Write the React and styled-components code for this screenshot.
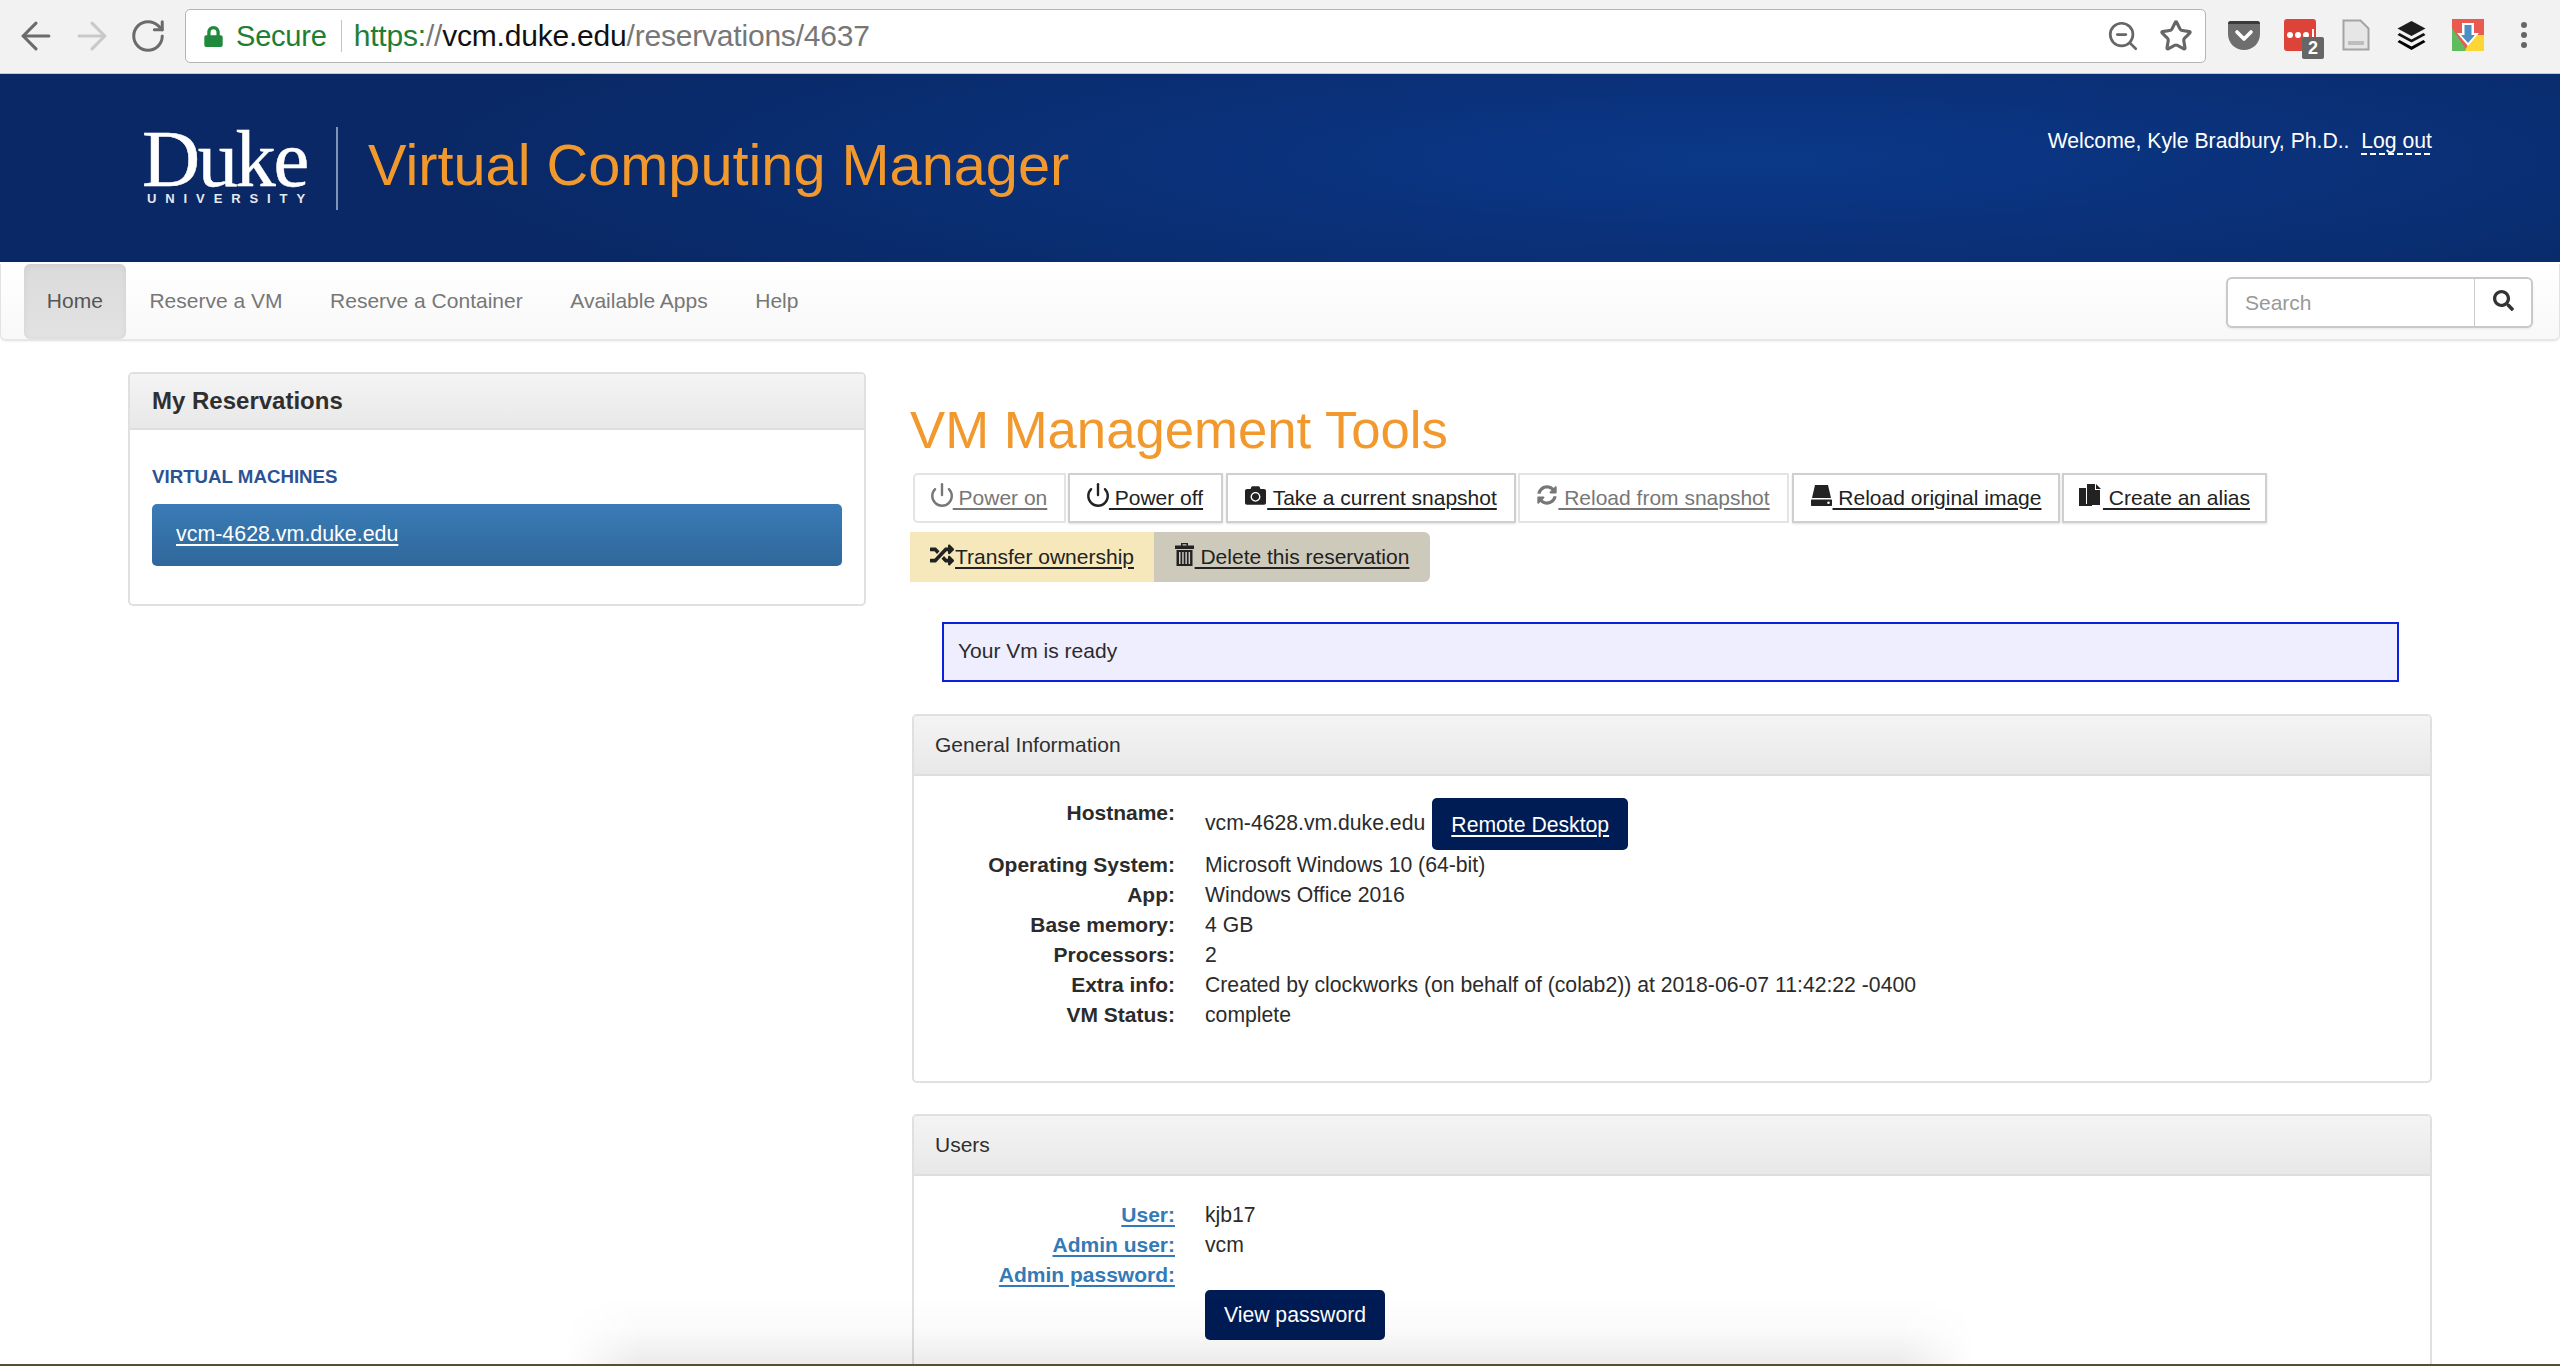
import React from "react";
import styled, { createGlobalStyle } from "styled-components";
import { ArrowLeft, ArrowRight, RotateCw, ZoomOut, Star, Power } from "lucide-react";
import { FaCamera, FaSyncAlt, FaRandom, FaSearch, FaLock } from "react-icons/fa";

const Global = createGlobalStyle`
  html, body { margin: 0; padding: 0; height: 100%; overflow: hidden; background: #fff; }
  body { font-family: "Liberation Sans", Arial, sans-serif; font-size: 21px; color: #2b2b2b; }
  * { box-sizing: border-box; }
`;

const Page = styled.div`
  position: relative;
  width: 2560px;
  height: 1366px;
  overflow: hidden;
  display: flex;
  flex-direction: column;
  background: #fff;
`;

/* browser chrome */
const Chrome = styled.div`
  flex: none;
  height: 74px;
  background: #f2f2f2;
  border-bottom: 1px solid #c8c8c8;
  display: flex;
  align-items: center;
  padding: 0 0 1px 14px;
`;
const NavIcons = styled.div`
  display: flex;
  align-items: center;
  gap: 12px;
  width: 171px;
  flex: none;
`;
const NavIcon = styled.span`
  display: flex;
  width: 44px;
  justify-content: center;
  color: ${(p) => (p.$off ? "#c9c9c9" : "#6b6b6b")};
`;
const Omnibox = styled.div`
  flex: none;
  width: 2021px;
  height: 54px;
  background: #fff;
  border: 1px solid #b4b4b4;
  border-radius: 5px;
  display: flex;
  align-items: center;
  padding: 0 12px 0 17px;
  font-size: 30px;
  letter-spacing: -0.2px;
`;
const Secure = styled.span`
  display: flex;
  align-items: center;
  gap: 12px;
  color: #1e7e34;
  padding-right: 14px;
  margin-right: 12px;
  border-right: 1px solid #c4c4c4;
  height: 32px;
  font-size: 29px;
  line-height: 32px;
`;
const UrlPart = styled.span`
  color: ${(p) => p.$c};
  white-space: pre;
`;
const OmniRight = styled.div`
  margin-left: auto;
  display: flex;
  align-items: center;
  gap: 19px;
  color: #666;
`;
const Extensions = styled.div`
  flex: 1;
  display: flex;
  align-items: center;
  position: relative;
  height: 60px;
`;
const Ext = styled.span`
  position: absolute;
  left: ${(p) => p.$x}px;
  top: ${(p) => p.$y}px;
  display: flex;
`;
const Badge = styled.span`
  position: absolute;
  left: 18px;
  top: 18px;
  width: 22px;
  height: 22px;
  border-radius: 2px;
  background: #666;
  color: #fff;
  font-size: 18px;
  font-weight: bold;
  line-height: 22px;
  text-align: center;
`;

/* site header */
const Banner = styled.header`
  flex: none;
  height: 188px;
  background:
    radial-gradient(ellipse 1350px 190px at 1750px 85px, #0b3889 0%, rgba(11, 56, 137, 0) 100%),
    #092865;
  display: flex;
  padding: 53px 128px 0 142px;
  position: relative;
`;
const Logo = styled.div`
  width: 171px;
  flex: none;
  color: #fff;
  display: flex;
  flex-direction: column;
  align-items: flex-start;
  height: 80px;
`;
const LogoWord = styled.div`
  font-family: "Liberation Serif", serif;
  font-size: 80.5px;
  line-height: 64px;
  letter-spacing: -2.4px;
  -webkit-text-stroke: 0.5px #fff;
`;
const LogoSub = styled.div`
  font-size: 13px;
  font-weight: bold;
  letter-spacing: 8.9px;
  line-height: 12px;
  margin: 2px 0 0 5px;
  white-space: nowrap;
  color: #e4e8f0;
`;
const Divider = styled.div`
  width: 2px;
  height: 83px;
  background: #7f93b6;
  margin: 0 30px 0 23px;
  flex: none;
`;
const SiteTitle = styled.h1`
  margin: 0;
  color: #f2992e;
  font-weight: 400;
  font-size: 57.7px;
  line-height: 76px;
  white-space: nowrap;
`;
const Welcome = styled.div`
  margin-left: auto;
  margin-top: 1px;
  color: #fff;
  font-size: 21.2px;
  line-height: 26px;
  white-space: pre;
`;
const LogOut = styled.a`
  color: #fff;
  padding-bottom: 3px;
  background: repeating-linear-gradient(90deg, #fff 0 6px, transparent 6px 9px) bottom left / 100% 2px no-repeat;
`;

/* nav */
const NavBar = styled.nav`
  flex: none;
  height: 77px;
  background: linear-gradient(#fff, #f8f8f8);
  border: 1px solid #e2e2e2;
  border-bottom: 2px solid #e6e6e6;
  border-top: none;
  border-radius: 0 0 6px 6px;
  display: flex;
  align-items: flex-start;
  padding: 0 26px 0 23px;
  margin-top: 2px;
  box-shadow: 0 1px 2px rgba(0, 0, 0, 0.05);
`;
const NavItem = styled.a`
  height: 75px;
  display: flex;
  align-items: center;
  padding: 0 22.8px 2px;
  margin-right: ${(p) => (p.$active ? "1px" : "2px")};
  color: ${(p) => (p.$active ? "#555" : "#777")};
  border-radius: 6px;
  background: ${(p) => (p.$active ? "linear-gradient(#dbdbdb, #e2e2e2)" : "transparent")};
  box-shadow: ${(p) => (p.$active ? "inset 0 2px 6px rgba(0,0,0,.06)" : "none")};
`;
const SearchForm = styled.div`
  margin-left: auto;
  display: flex;
  width: 307px;
  height: 51px;
  border: 2px solid #c9c9c9;
  border-radius: 6px;
  background: #fff;
  margin-top: 13px;
  box-shadow: 0 1px 2px rgba(0, 0, 0, 0.08);
`;
const SearchInput = styled.div`
  flex: 1;
  color: #999;
  padding-left: 17px;
  line-height: 47px;
  font-size: 21px;
`;
const SearchBtn = styled.div`
  width: 57px;
  border-left: 1px solid #ccc;
  display: flex;
  align-items: center;
  justify-content: center;
  color: #333;
  padding-bottom: 4px;
`;

/* content */
const Content = styled.main`
  flex: 1;
  display: grid;
  grid-template-columns: 738px 1520px;
  column-gap: 46px;
  padding: 31px 0 0 128px;
  min-height: 0;
`;
const Panel = styled.section`
  border: 2px solid #e0e0e0;
  border-radius: 5px;
  background: #fff;
  overflow: hidden;
  height: ${(p) => p.$h}px;
  margin-bottom: ${(p) => p.$mb || 0}px;
  flex: none;
`;
const PanelHead = styled.div`
  height: ${(p) => p.$h}px;
  background: linear-gradient(#f4f4f4, #e8e8e8);
  border-bottom: 2px solid #dedede;
  display: flex;
  align-items: center;
  padding-left: ${(p) => p.$pl}px;
  font-size: ${(p) => p.$fs || 21}px;
  font-weight: ${(p) => (p.$bold ? "bold" : "normal")};
  color: #2f2f2f;
`;
const SideHeading = styled.div`
  margin: 35px 0 0 22px;
  color: #2c5293;
  font-size: 18.7px;
  font-weight: bold;
  line-height: 24px;
`;
const VmLink = styled.a`
  display: flex;
  align-items: center;
  margin: 15px 22px 0 22px;
  height: 62px;
  border-radius: 5px;
  padding: 0 24px;
  background: linear-gradient(#3a7bb6, #2f689b);
  border-bottom: 1px solid #2c6ca5;
  color: #fff;
  font-size: 21.4px;
  text-decoration: underline;
  text-decoration-thickness: 2px;
  text-underline-offset: 3px;
`;
const Main = styled.div`
  display: flex;
  flex-direction: column;
  min-width: 0;
`;
const Heading = styled.h2`
  margin: 26px 0 0 -2px;
  color: #f2992e;
  font-weight: 400;
  font-size: 52.7px;
  line-height: 64px;
  white-space: nowrap;
`;
const ToolRow = styled.div`
  display: flex;
  height: 50px;
  flex: none;
  margin: ${(p) => p.$mt}px 0 0 ${(p) => p.$ml || 0}px;
`;
const Tool = styled.a`
  width: ${(p) => p.$w}px;
  flex: none;
  margin-right: ${(p) => p.$mr || 0}px;
  display: flex;
  align-items: center;
  justify-content: center;
  gap: 1px;
  background: #fff;
  border: 2px solid ${(p) => (p.$off ? "#e4e4e4" : "#cfcfcf")};
  border-radius: ${(p) => (p.$first ? "5px 0 0 5px" : "0")};
  box-shadow: ${(p) => (p.$off ? "none" : "0 1px 2px rgba(0,0,0,.12)")};
  color: ${(p) => (p.$off ? "#777" : "#222")};
  padding-bottom: 1px;
  white-space: pre;
`;
const ColorTool = styled.a`
  width: ${(p) => p.$w}px;
  flex: none;
  display: flex;
  align-items: center;
  justify-content: center;
  gap: 1px;
  background: ${(p) => p.$bg};
  border-radius: ${(p) => p.$r};
  color: #222;
  white-space: pre;
`;
const U = styled.span`
  text-decoration: underline;
  text-decoration-thickness: 2px;
  text-underline-offset: 3px;
`;
const Glyph = styled.span`
  display: flex;
  margin: -5px ${(p) => p.$mx ?? 0}px 0;
`;
const Alert = styled.div`
  margin: 40px 33px 0 30px;
  height: 60px;
  flex: none;
  background: #eeeeff;
  border: 2px solid #0b1fe0;
  padding: 0 0 2px 14px;
  display: flex;
  align-items: center;
`;
const InfoPanel = styled(Panel)`
  margin-top: ${(p) => p.$mt}px;
`;
const InfoBody = styled.div`
  padding-top: ${(p) => p.$pt}px;
`;
const InfoRow = styled.div`
  display: grid;
  grid-template-columns: 261px 1fr;
  column-gap: 30px;
  line-height: 30px;
  height: ${(p) => p.$h || 30}px;
`;
const Label = styled.div`
  text-align: right;
  font-weight: bold;
  white-space: nowrap;
`;
const LabelLink = styled.a`
  color: #337ab7;
  text-decoration: underline;
  text-decoration-thickness: 2px;
  text-underline-offset: 3px;
`;
const Value = styled.div`
  white-space: nowrap;
  font-size: 21.2px;
  display: flex;
  align-items: ${(p) => (p.$host ? "flex-start" : "stretch")};
`;
const HostText = styled.span`
  margin: 10px 7px 0 0;
`;
const DarkButton = styled.a`
  display: flex;
  align-items: center;
  justify-content: center;
  width: ${(p) => p.$w}px;
  height: ${(p) => p.$h}px;
  padding-top: ${(p) => (p.$u ? "2px" : "0")};
  background: #001c54;
  border-radius: 5px;
  color: #fff;
  text-decoration: ${(p) => (p.$u ? "underline" : "none")};
  text-decoration-thickness: 2px;
  text-underline-offset: 3px;
`;

/* what lies over the page at the bottom edge */
const BottomShade = styled.div`
  position: absolute;
  left: 565px;
  right: 585px;
  bottom: 2px;
  height: 66px;
  pointer-events: none;
  background: linear-gradient(rgba(0, 0, 0, 0), rgba(0, 0, 0, 0.02) 50%, rgba(0, 0, 0, 0.08));
  mask-image: linear-gradient(90deg, transparent, #000 75px, #000 calc(100% - 75px), transparent);
`;
const BottomEdge = styled.div`
  position: absolute;
  left: 0;
  right: 0;
  bottom: 0;
  height: 2px;
  background: #55502f;
`;

const PowerIcon = () => (
  <Glyph $mx={-3}>
    <Power size={26} strokeWidth={2.2} />
  </Glyph>
);
const HddIcon = () => (
  <svg width="21" height="21" viewBox="0 0 21 21" fill="currentColor">
    <path d="M4 0h13l3 13H1z" />
    <path d="M1 14.5h19c.6 0 1 .4 1 1V20c0 .6-.4 1-1 1H1c-.6 0-1-.4-1-1v-4.500c0-.6.4-1 1-1z" />
    <circle cx="17.500" cy="17.800" r="1.300" fill="#fff" />
  </svg>
);
const CopyIcon = () => (
  <svg width="23" height="22" viewBox="0 0 23 22" fill="currentColor">
    <path d="M0 4h7v16h6v2H0z" />
    <path d="M8 0h8v6h5v15H8z" />
    <path d="M17 0l5 5h-5z" />
  </svg>
);
const TrashIcon = () => (
  <svg width="19" height="23" viewBox="0 0 19 23" fill="currentColor">
    <path d="M6 0h7v2.500h6V6H0V2.500h6zM7.500 1.200v1.300h4V1.200z" fillRule="evenodd" />
    <path d="M1.500 7h16v16h-16zM4 9v12h1.500V9zm3.200 0v12h1.500V9zm3.200 0v12h1.500V9zm3.200 0v12h1.500V9z" fillRule="evenodd" />
  </svg>
);

const rows = [
  ["Operating System:", "Microsoft Windows 10 (64-bit)"],
  ["App:", "Windows Office 2016"],
  ["Base memory:", "4 GB"],
  ["Processors:", "2"],
  ["Extra info:", "Created by clockworks (on behalf of (colab2)) at 2018-06-07 11:42:22 -0400"],
  ["VM Status:", "complete"],
];

export default function App() {
  return (
    <Page>
      <Global />
      <Chrome>
        <NavIcons>
          <NavIcon><ArrowLeft size={44} strokeWidth={1.7} /></NavIcon>
          <NavIcon $off><ArrowRight size={44} strokeWidth={1.7} /></NavIcon>
          <NavIcon><RotateCw size={38} strokeWidth={1.9} /></NavIcon>
        </NavIcons>
        <Omnibox>
          <Secure>
            <FaLock size={21} color="#1f8a3b" />
            Secure
          </Secure>
          <UrlPart $c="#1e7e34">https:</UrlPart>
          <UrlPart $c="#777">//</UrlPart>
          <UrlPart $c="#111">vcm.duke.edu</UrlPart>
          <UrlPart $c="#777">/reservations/4637</UrlPart>
          <OmniRight>
            <ZoomOut size={34} strokeWidth={1.9} />
            <Star size={34} strokeWidth={2.2} />
          </OmniRight>
        </Omnibox>
        <Extensions>
          <Ext $x={22} $y={15}>
            <svg width="32" height="29" viewBox="0 0 32 29">
              <path d="M0 3c0-2 1-3 3-3h26c2 0 3 1 3 3v10c0 9-7 16-16 16S0 22 0 13z" fill="#6e6e6e" />
              <path d="M0 3c0-2 1-3 3-3h26c2 0 3 1 3 3H0z" fill="#3a3a3a" />
              <path d="M9 11l7 7 7-7" fill="none" stroke="#fff" strokeWidth="3.600" strokeLinecap="round" strokeLinejoin="round" />
            </svg>
          </Ext>
          <Ext $x={78} $y={13}>
            <svg width="32" height="32" viewBox="0 0 32 32">
              <rect width="32" height="32" rx="3" fill="#dd4339" />
              <circle cx="6" cy="16" r="3" fill="#fff" />
              <circle cx="14" cy="16" r="3" fill="#fff" />
              <circle cx="22" cy="16" r="3" fill="#fff" />
              <rect x="28" y="10" width="2" height="12" fill="#fff" />
            </svg>
            <Badge>2</Badge>
          </Ext>
          <Ext $x={136} $y={13}>
            <svg width="28" height="32" viewBox="0 0 28 32">
              <path d="M1.500 1.500h17l8 8v21h-25z" fill="#e6e6e6" stroke="#a4a4a4" strokeWidth="2" />
              <rect x="6" y="22" width="16" height="4" fill="#bdbdbd" />
            </svg>
          </Ext>
          <Ext $x={191} $y={15}>
            <svg width="29" height="29" viewBox="0 0 29 29">
              <path d="M14.500 0l14 7.500-14 7.500L.500 7.500z" fill="#1d1d1d" />
              <path d="M2.500 12l12 6.500 12-6.500 2 2-14 7.500L.500 14z" fill="#111" />
              <path d="M2.500 19l12 6.500 12-6.500 2 2-14 8-14-8z" fill="#000" />
            </svg>
          </Ext>
          <Ext $x={246} $y={13}>
            <svg width="32" height="32" viewBox="0 0 32 32">
              <rect width="32" height="32" fill="#ea5a50" />
              <path d="M0 9l14 21-1 2H0z" fill="#5fbc5e" />
              <path d="M32 16H20l-7 16h19z" fill="#fbd634" />
              <path d="M10 4h12v10h5L16 27 5 14h5z" fill="#fff" />
              <path d="M12.500 6h7v10h3.500l-7 8-7-8h3.500z" fill="#4a8fc4" />
            </svg>
          </Ext>
          <Ext $x={315} $y={16}>
            <svg width="6" height="26" viewBox="0 0 6 26">
              <circle cx="3" cy="3" r="3" fill="#666" />
              <circle cx="3" cy="13" r="3" fill="#666" />
              <circle cx="3" cy="23" r="3" fill="#666" />
            </svg>
          </Ext>
        </Extensions>
      </Chrome>

      <Banner>
        <Logo>
          <LogoWord>Duke</LogoWord>
          <LogoSub>UNIVERSITY</LogoSub>
        </Logo>
        <Divider />
        <SiteTitle>Virtual Computing Manager</SiteTitle>
        <Welcome>
          Welcome, Kyle Bradbury, Ph.D..{"  "}
          <LogOut>Log out</LogOut>
        </Welcome>
      </Banner>

      <NavBar>
        <NavItem $active>Home</NavItem>
        <NavItem>Reserve a VM</NavItem>
        <NavItem>Reserve a Container</NavItem>
        <NavItem>Available Apps</NavItem>
        <NavItem>Help</NavItem>
        <SearchForm>
          <SearchInput>Search</SearchInput>
          <SearchBtn><FaSearch size={21} /></SearchBtn>
        </SearchForm>
      </NavBar>

      <Content>
        <div>
          <Panel $h={234}>
            <PanelHead $h={56} $pl={22} $fs={24} $bold>My Reservations</PanelHead>
            <SideHeading>VIRTUAL MACHINES</SideHeading>
            <VmLink>vcm-4628.vm.duke.edu</VmLink>
          </Panel>
        </div>
        <Main>
          <Heading>VM Management Tools</Heading>
          <ToolRow $mt={11} $ml={1}>
            <Tool $w={153} $mr={2} $off $first><PowerIcon /><U> Power on</U></Tool>
            <Tool $w={155} $mr={3}><PowerIcon /><U> Power off</U></Tool>
            <Tool $w={290} $mr={2}><Glyph><FaCamera size={21} /></Glyph><U> Take a current snapshot</U></Tool>
            <Tool $w={271} $mr={3} $off><Glyph><FaSyncAlt size={20} /></Glyph><U> Reload from snapshot</U></Tool>
            <Tool $w={268} $mr={2}><Glyph><HddIcon /></Glyph><U> Reload original image</U></Tool>
            <Tool $w={205}><Glyph><CopyIcon /></Glyph><U> Create an alias</U></Tool>
          </ToolRow>
          <ToolRow $mt={9} $ml={-2}>
            <ColorTool $w={244} $bg="#f6e8bb" $r="0"><Glyph><FaRandom size={24} /></Glyph><U>Transfer ownership</U></ColorTool>
            <ColorTool $w={276} $bg="#cdcabb" $r="0 6px 6px 0"><Glyph><TrashIcon /></Glyph><U> Delete this reservation</U></ColorTool>
          </ToolRow>
          <Alert>Your Vm is ready</Alert>
          <InfoPanel $h={369} $mt={32} $mb={31}>
            <PanelHead $h={60} $pl={21}>General Information</PanelHead>
            <InfoBody $pt={22}>
              <InfoRow $h={52}>
                <Label>Hostname:</Label>
                <Value $host>
                  <HostText>vcm-4628.vm.duke.edu</HostText>
                  <DarkButton $w={196} $h={52} $u>Remote Desktop</DarkButton>
                </Value>
              </InfoRow>
              {rows.map(([k, v]) => (
                <InfoRow key={k}>
                  <Label>{k}</Label>
                  <Value>{v}</Value>
                </InfoRow>
              ))}
            </InfoBody>
          </InfoPanel>
          <Panel $h={300}>
            <PanelHead $h={60} $pl={21}>Users</PanelHead>
            <InfoBody $pt={24}>
              <InfoRow>
                <Label><LabelLink>User:</LabelLink></Label>
                <Value>kjb17</Value>
              </InfoRow>
              <InfoRow>
                <Label><LabelLink>Admin user:</LabelLink></Label>
                <Value>vcm</Value>
              </InfoRow>
              <InfoRow>
                <Label><LabelLink>Admin password:</LabelLink></Label>
                <Value />
              </InfoRow>
              <InfoRow>
                <span />
                <Value>
                  <DarkButton $w={180} $h={50}>View password</DarkButton>
                </Value>
              </InfoRow>
            </InfoBody>
          </Panel>
        </Main>
      </Content>
      <BottomShade />
      <BottomEdge />
    </Page>
  );
}
